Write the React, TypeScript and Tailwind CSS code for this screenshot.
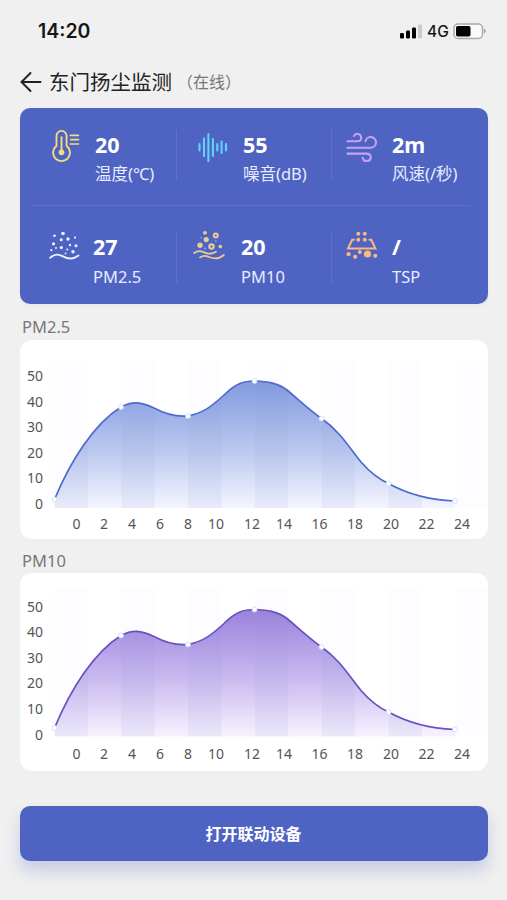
import type { ReactNode } from 'react';

const CJK = "font-['Noto_Sans','Noto_Sans_CJK_SC',sans-serif]";

function ThermometerIcon() {
  return (
    <svg width="30" height="33" viewBox="0 0 30 34" fill="none" stroke="#f3dc7c" strokeWidth="1.9" strokeLinecap="round">
      <path d="M5.2 17.4V7.2a5.2 5.2 0 0 1 10.4 0v10.2a8.7 8.7 0 1 1-10.4 0Z" />
      <path d="M10.4 8.5v14" strokeWidth="2" />
      <circle cx="10.4" cy="24" r="3" fill="#f3dc7c" stroke="none" />
      <path d="M19.4 6.5h8.5M19.8 11h8.1M19.4 15.5h8.5" strokeWidth="1.7" />
    </svg>
  );
}

function NoiseIcon() {
  return (
    <svg width="30" height="30" viewBox="0 0 30 30" fill="none" stroke="#63d2fb" strokeWidth="2.1" strokeLinecap="round">
      <path d="M1.5 12v6.5M6 6.5v17.5M10.4 2v27M14.9 7v17M19.3 12v6.5M23.6 9.5v11.5M28 12v6.5" />
    </svg>
  );
}

function WindIcon() {
  return (
    <svg width="32" height="30" viewBox="0 0 32 30" fill="none" stroke="#c3a2f2" strokeWidth="2.1" strokeLinecap="round">
      <path d="M2.4 9.2h9.6c3 0 4.2-1 4.2-3.3a3.9 3.9 0 0 0-7.3-2" />
      <path d="M2.4 15.7h23.3a5.3 5.3 0 1 0-5.2-6.4" />
      <path d="M2.4 21.6H21c3 0 4.8 1.4 4.8 3.8a4.1 4.1 0 0 1-8.1.5" />
    </svg>
  );
}

function FineDustIcon() {
  const dots = [
    [5.5, 4.7, 1.3], [14, 2.5, 1.8], [26, 6.6, 1.1], [12.2, 8.8, 1.5], [19, 8, 1.7], [4.5, 12.8, 1.6],
    [7, 17, 1], [12.3, 16.6, 1.6], [2.3, 19.2, 1.1], [21, 14, 1.2], [27, 14.8, 1.5], [18.2, 18.4, 1], [24, 20.8, 1.7], [16.5, 22.4, .9],
  ];
  return (
    <svg width="31" height="30" viewBox="0 0 31 30" fill="#edf1ff">
      {dots.map(([x, y, r]) => <circle key={x} cx={x} cy={y} r={r} />)}
      <path d="M1.2 26.7C6 22.9 9.2 22.8 14 25.4c5.4 3 10 3.3 15.5-.9" fill="none" stroke="#edf1ff" strokeWidth="1.9" strokeLinecap="round" />
    </svg>
  );
}

function CoarseDustIcon() {
  return (
    <svg width="32" height="30" viewBox="0 0 32 30" fill="#eccb91">
      <circle cx="12" cy="2.8" r="1.9" />
      <circle cx="22.8" cy="5.4" r="2" fill="none" stroke="#eccb91" strokeWidth="2" />
      <circle cx="13.2" cy="9.6" r="2.6" />
      <circle cx="7" cy="15.2" r="2.7" />
      <circle cx="18.5" cy="16.6" r="2.2" fill="none" stroke="#eccb91" strokeWidth="2.1" />
      <circle cx="27.3" cy="16.6" r="1.8" />
      <g fill="#69cce8"><circle cx="8.2" cy="7.8" r=".8" /><circle cx="22.8" cy="11" r=".8" /><circle cx="12" cy="18.5" r=".9" /></g>
      <g fill="none" stroke="#eccb91" strokeWidth="1.8" strokeLinecap="round">
        <path d="M1.2 23c3.2-2.4 5.5-2.5 9.2-.9 5.4 2.2 8.3 2.3 12.6-.3" />
        <path d="M7 27.4c2.8-2 5.3-2 9-.4 6.2 2.6 10.2 2 14.8-2" />
      </g>
    </svg>
  );
}

function ParticleFilterIcon() {
  return (
    <svg width="32" height="30" viewBox="0 0 32 30" fill="#fab77f">
      <circle cx="12.3" cy="3.7" r="2" /><circle cx="18.8" cy="3.7" r="2" />
      <circle cx="12.3" cy="9.7" r="2" /><circle cx="18.8" cy="9.7" r="2" />
      <path d="M8 9.7H6.2L2 18.5h27.4l-4.2-8.8h-1.8" fill="none" stroke="#fab77f" strokeWidth="2" strokeLinecap="round" />
      <circle cx="2.6" cy="24.2" r="2.1" /><circle cx="9.2" cy="26.8" r="2.1" /><circle cx="13.8" cy="22" r="2" />
      <circle cx="21.5" cy="24" r="3.6" /><circle cx="29.2" cy="25.8" r="2.1" />
    </svg>
  );
}

interface MetricProps {
  icon: ReactNode;
  value: string;
  label: string;
  className: string;
}

function Metric({ icon, value, label, className }: MetricProps) {
  return (
    <div className={`flex items-start ${className}`}>
      <div className="w-[45px] shrink-0">{icon}</div>
      <div className="pt-[2px] whitespace-nowrap text-[#e8ecff]">
        <div className="h-[29px] text-[21.5px] leading-[29px] font-bold text-white">{value}</div>
        {label.startsWith('PM') || label === 'TSP' ? (
          <div className="mt-[4px] text-[16.5px] leading-[24px]">{label}</div>
        ) : (
          <div className="mt-[3px] text-[16.5px] leading-[24px]">{label}</div>
        )}
      </div>
    </div>
  );
}

const curve =
  'M34.5 159.5C51 120 74 84 101 67C112 61 121 61.5 134 68C145 74 156 77 168 76C183 73 191 67 204 55C216 43 224 41 234.5 41C248 41.5 258 43 267 50C279 60 288 69 301.5 78.5C321 92 330 109 341 122C348 130 356 138 368.5 143.5C389 155 411 160 435 161';
const markers = [[34.5, 159.5], [101, 67], [168, 76], [234.5, 41], [301.5, 78.5], [368.5, 143.5], [435, 161]];
const hours = [[56.5, 0], [84, 2], [112, 4], [140, 6], [168, 8], [196, 10], [232, 12], [264, 14], [299.5, 16], [335, 18], [371, 20], [406.5, 22], [442, 24]];

interface ChartProps {
  id: string;
  line: string;
  top: string;
  middle: string;
  bottom: string;
  plotShift: number;
  yShift: number;
  xShift: number;
}

function Chart({ id, line, top, middle, bottom, plotShift, yShift, xShift }: ChartProps) {
  return (
    <svg className="block" width="468" height="198" viewBox="0 0 468 198">
      <defs>
        <linearGradient id={`${id}-fill`} gradientUnits="userSpaceOnUse" x1="0" y1="40" x2="0" y2="168">
          <stop offset="0" stopColor={top} />
          <stop offset=".55" stopColor={middle} />
          <stop offset="1" stopColor={bottom} />
        </linearGradient>
        <linearGradient id={`${id}-band`} gradientUnits="userSpaceOnUse" x1="0" y1="20" x2="0" y2="168">
          <stop offset="0" stopColor="#5c78bc" stopOpacity=".02" />
          <stop offset="1" stopColor="#5c78bc" stopOpacity=".08" />
        </linearGradient>
        <clipPath id={`${id}-area`}><path d={`${curve}V168H34.5Z`} /></clipPath>
      </defs>
      <g transform={`translate(0 ${plotShift})`}>
        {[0, 1, 2, 3, 4, 5, 6].map((n) => (
          <rect key={n} x={34.5 + n * 66.8} y="20" width={n === 6 ? 32 : 33.4} height="148" fill="#f9faff" opacity=".3" />
        ))}
        <path d={`${curve}V168H34.5Z`} fill={`url(#${id}-fill)`} />
        <g clipPath={`url(#${id}-area)`}>
          {[0, 1, 2, 3, 4, 5].map((n) => (
            <rect key={n} x={34.5 + n * 66.8} y="20" width="33.4" height="148" fill={`url(#${id}-band)`} />
          ))}
        </g>
        <path d={curve} fill="none" stroke={line} strokeWidth="1.7" />
        {markers.map(([x, y]) => <circle key={x} cx={x} cy={y} r="2.5" fill="#fff" stroke="#cfd7f5" strokeWidth=".8" />)}
      </g>
      <g fill="#555" fontSize="14">
        {[50, 40, 30, 20, 10, 0].map((v, i) => (
          <text key={v} x={23} y={41 + i * 25.6 + yShift} textAnchor="end">{v}</text>
        ))}
        {hours.map(([x, h]) => <text key={h} x={x} y={189 + xShift} textAnchor="middle">{h}</text>)}
      </g>
    </svg>
  );
}

function ColumnDividers() {
  return (
    <>
      <div className="col-start-1 row-start-1 mt-[2px] h-[51px] w-px justify-self-end bg-[#6370cb]" />
      <div className="col-start-2 row-start-1 mt-[2px] h-[51px] w-px justify-self-end bg-[#6370cb]" />
    </>
  );
}

export default function App() {
  return (
    <main className={`flex h-[900px] w-[507px] flex-col overflow-hidden bg-[#f0f0f0] pr-[19px] pl-5 ${CJK}`}>
      <header className="flex h-[62px] shrink-0 items-center justify-between pr-px pl-[18px] font-['Inter',sans-serif] text-[#171717]">
        <span className="pt-[2px] text-[19.5px] font-semibold">14:20</span>
        <div className="flex items-center">
          <svg width="24" height="16" viewBox="0 0 24 16">
            <rect x="1" y="10" width="4" height="5.5" rx="1.2" />
            <rect x="7" y="7.5" width="4" height="8" rx="1.2" />
            <rect x="13" y="4.5" width="4" height="11" rx="1.2" />
            <rect x="19" y="1.5" width="4" height="14" rx="1.2" fill="#cbcbcb" />
          </svg>
          <span className="ml-[4px] w-[22px] pt-px text-[15.5px] font-medium">4G</span>
          <svg className="ml-[4px]" width="34" height="17" viewBox="0 0 34 17">
            <rect x="1" y="1" width="28.5" height="14.5" rx="4" fill="#fafafa" stroke="#a9a9a9" strokeWidth="1.5" />
            <rect x="3" y="3" width="14.5" height="10.5" rx="1.8" />
            <path d="M31.2 5.5q3 2.6 0 5.2Z" fill="#8d8d8d" />
          </svg>
        </div>
      </header>

      <div className="flex h-[46px] shrink-0 items-center pb-[7px] text-[#222]">
        <svg width="24" height="22" viewBox="0 0 24 22" fill="none" stroke="#222" strokeWidth="2" strokeLinecap="round">
          <path d="m10.5 2-9 9 9 9M1.5 11h19" />
        </svg>
        <h1 className="ml-[5px] text-[20.5px] leading-[30px] font-normal">东门扬尘监测</h1>
        <span className="ml-[5px] text-[16px] text-[#777]">（在线）</span>
      </div>

      <section className="h-[196px] shrink-0 rounded-[10px] bg-[#4f63c3] shadow-[0_2px_5px_#0000000a]">
        <div className="grid h-[98px] grid-cols-[157px_155px_156px] items-start pt-[20px]">
          <ColumnDividers />
          <Metric className="col-start-1 row-start-1 pl-[30px]" icon={<div className="pt-px pl-px"><ThermometerIcon /></div>} value="20" label="温度(℃)" />
          <Metric className="col-start-2 row-start-1 pl-[21px]" icon={<div className="pt-[4px]"><NoiseIcon /></div>} value="55" label="噪音(dB)" />
          <Metric className="col-start-3 row-start-1 pl-[15px]" icon={<div className="-ml-[2px] pt-[4px]"><WindIcon /></div>} value="2m" label="风速(/秒)" />
        </div>
        <div className="mr-[18px] ml-3 -mt-px h-px bg-[#6370cb]" />
        <div className="grid h-[98px] grid-cols-[157px_155px_156px] items-start pt-[24px]">
          <ColumnDividers />
          <Metric className="col-start-1 row-start-1 pl-[28px]" icon={<div className="pt-px pl-px"><FineDustIcon /></div>} value="27" label="PM2.5" />
          <Metric className="col-start-2 row-start-1 pl-[19px]" icon={<div className="-ml-[3px]"><CoarseDustIcon /></div>} value="20" label="PM10" />
          <Metric className="col-start-3 row-start-1 pl-[15px]" icon={<div className="-ml-px"><ParticleFilterIcon /></div>} value="/" label="TSP" />
        </div>
      </section>

      <h2 className="h-[36px] shrink-0 pt-[11px] pl-[2px] text-[16.5px] leading-[24px] font-normal text-[#777]">PM2.5</h2>
      <section className="h-[199px] shrink-0 rounded-[12px] bg-white">
        <Chart id="pm25" line="#4c6bcc" top="#8299df" middle="#bac8ef" bottom="#f5f5ff" plotShift={0} yShift={0} xShift={0} />
      </section>
      <h2 className="h-[34px] shrink-0 pt-[10px] pl-[2px] text-[16.5px] leading-[24px] font-normal text-[#777]">PM10</h2>
      <section className="h-[198px] shrink-0 rounded-[12px] bg-white">
        <Chart id="pm10" line="#6a50c3" top="#9a81dc" middle="#c9baef" bottom="#f8f2ff" plotShift={-4.5} yShift={-2.5} xShift={-3.5} />
      </section>
      <button className="mt-[35px] h-[55px] w-full shrink-0 rounded-[10px] bg-[#4f63c3] pr-px text-[16px] font-bold text-white shadow-[0_10px_16px_#4f63c340]">
        打开联动设备
      </button>
    </main>
  );
}
